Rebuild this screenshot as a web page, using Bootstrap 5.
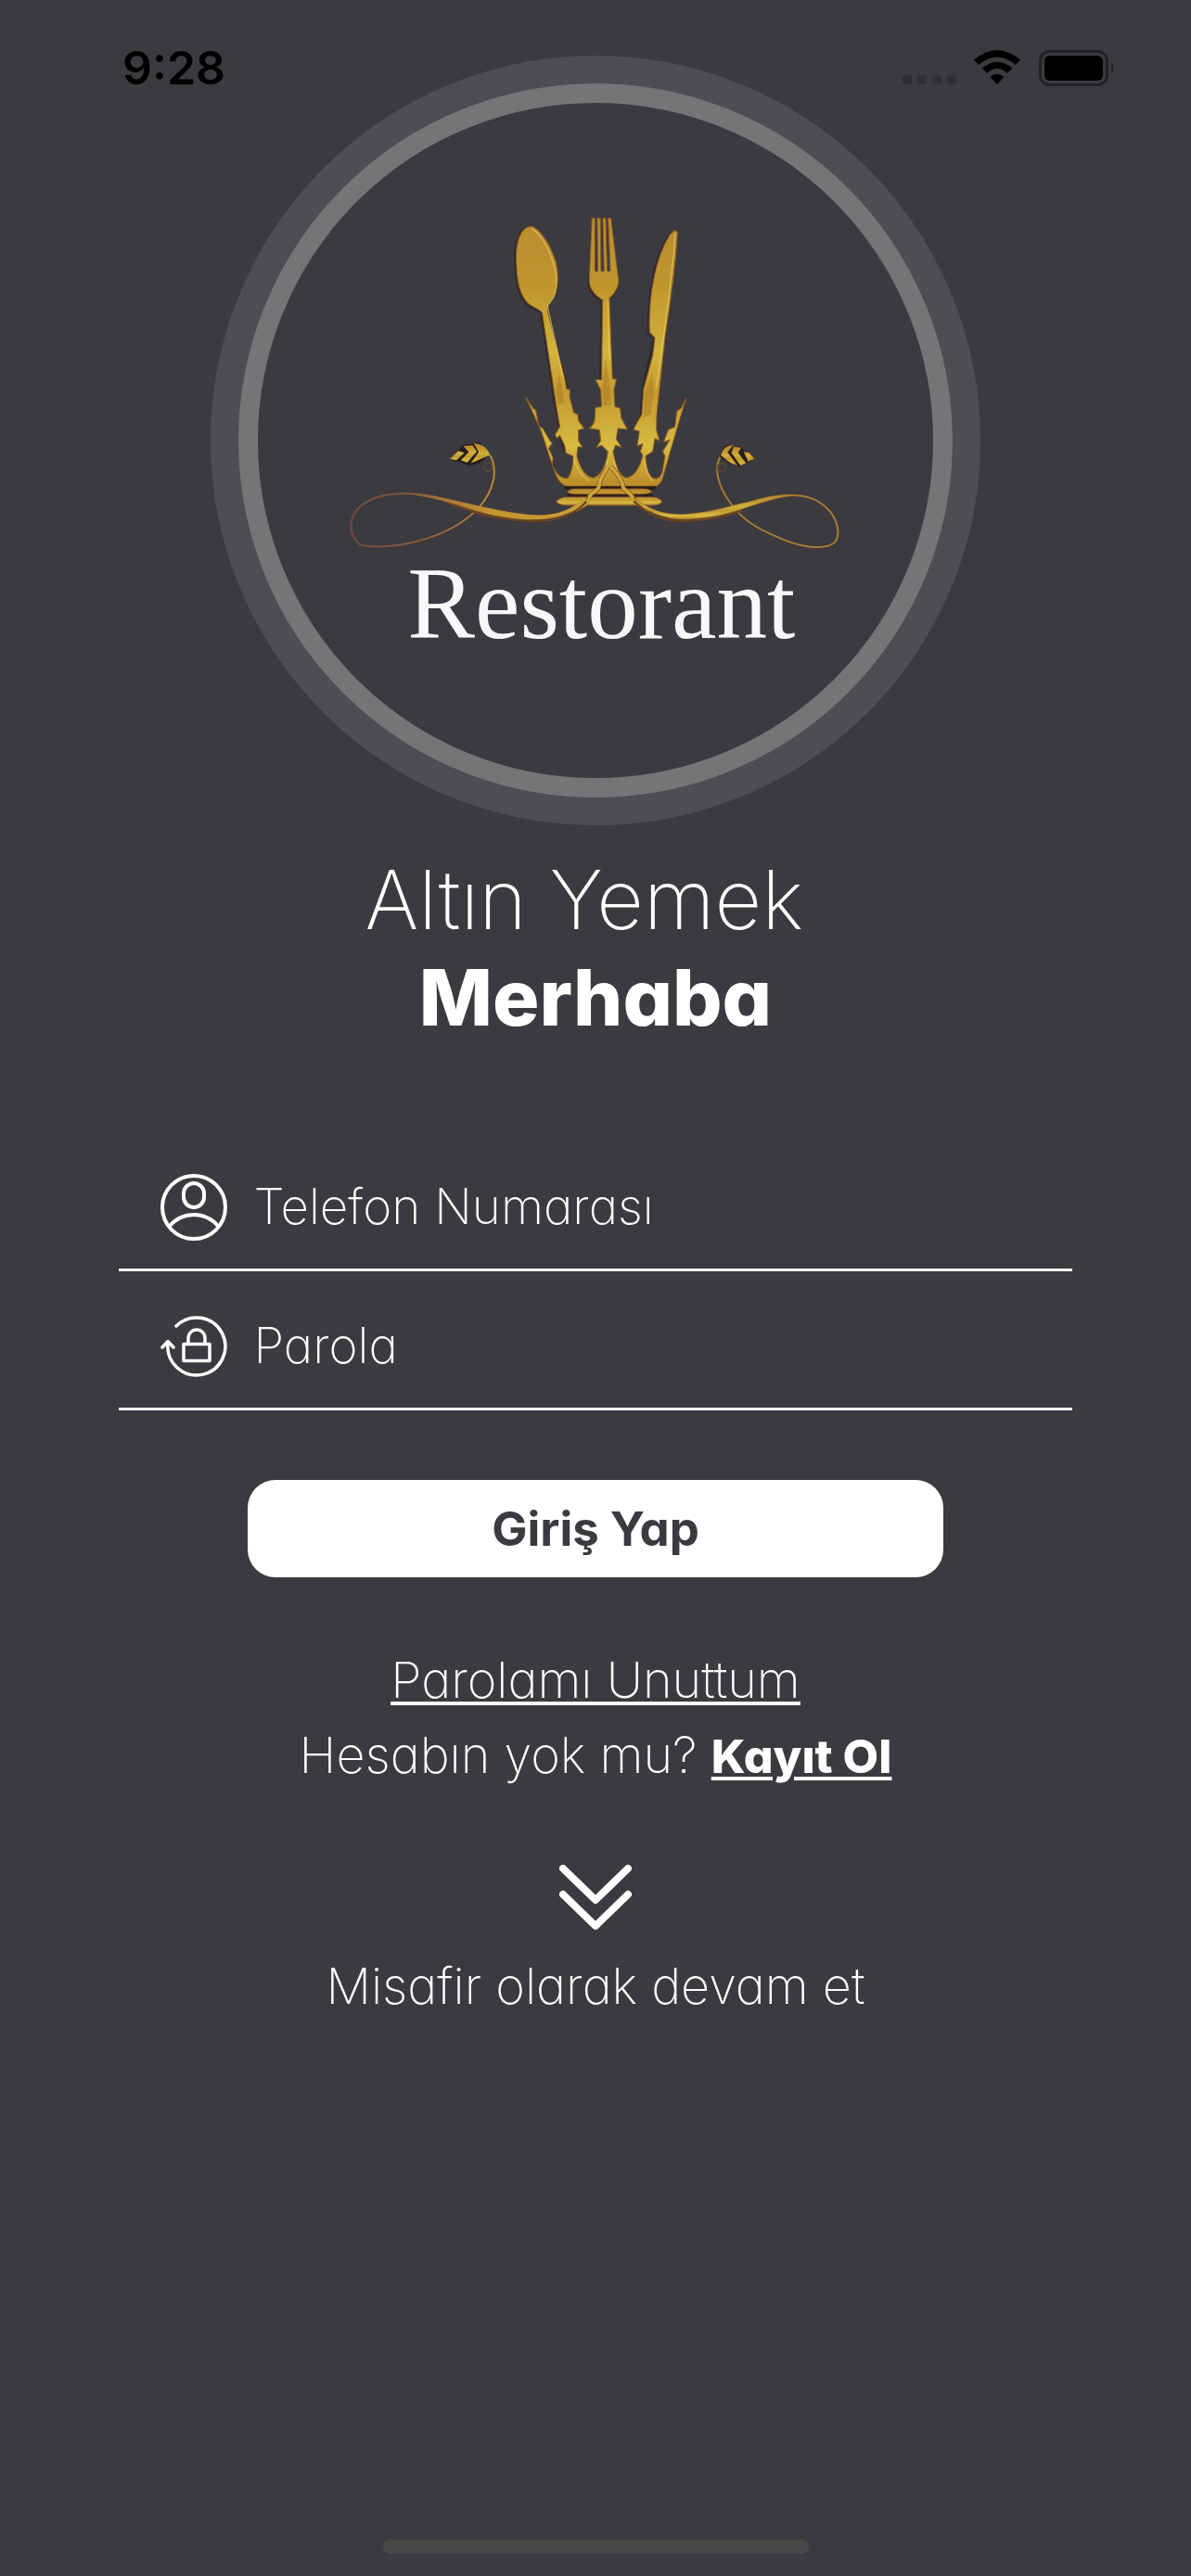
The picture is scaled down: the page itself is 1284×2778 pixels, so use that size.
<!DOCTYPE html>
<html lang="tr">
<head>
<meta charset="utf-8">
<meta name="viewport" content="width=device-width, initial-scale=1">
<title>Altın Yemek</title>
<link href="https://cdn.jsdelivr.net/npm/bootstrap@5.3.0/dist/css/bootstrap.min.css" rel="stylesheet">
<style>
  body {
    background: #3b3a3e;
    color: #fff;
    font-family: Inter, "Liberation Sans", sans-serif;
    font-size: 54px;
    font-weight: 200;
    line-height: 81px;
    font-feature-settings: "cv11";
  }
  input, button { font-feature-settings: inherit; }
  .status-bar { padding: 41px 84px 0 132px; color: #000; }
  .clock { font-size: 50px; font-weight: 600; line-height: 64px; font-feature-settings: normal; }
  .signal { width: 232px; height: 42px; margin-top: 13px; }
  .screen { padding: 60px 10% 0; }
  .emblem {
    width: 830px;
    max-width: 100%;
    aspect-ratio: 1;
    border: 30px solid #4e4d51;
  }
  .emblem-inner { border: 21px solid #757476; }
  .emblem svg { width: 77%; margin-top: -30px; }
  .brand-word { font-family: "Liberation Serif", serif; font-size: 109px; font-weight: 400; }
  .greeting { margin-top: 28px; font-size: 88px; line-height: 105px; font-weight: 200; }
  .greeting strong { font-size: 84px; font-weight: 800; }
  .login { margin-top: 93px; }
  .field {
    height: 150px;
    padding: 14px 45px 0;
    gap: 28px;
    border-bottom: 3px solid #f7f7f5;
  }
  .field label { line-height: 0; }
  .field svg { width: 72px; height: 72px; }
  .field .form-control { height: 81px; font-size: 53px; font-weight: 200; line-height: 81px; color: #fff; }
  .field .form-control::placeholder { color: #fff; opacity: 1; }
  .btn-login {
    width: 750px;
    max-width: 100%;
    height: 105px;
    margin-top: 75px;
    border-radius: 30px;
    background: #fff;
    color: #3b3a3e;
    font-size: 51px;
    font-weight: 700;
    line-height: 60px;
  }
  .help { margin-top: 70px; }
  .help a { text-decoration-thickness: 4px; text-underline-offset: 4px; }
  .register { font-size: 50px; font-weight: 800; }
  .guest { margin-top: 76px; gap: 20px; }
  .guest svg { width: 78px; height: 70px; }
  .home-bar { width: 459px; height: 15px; margin-bottom: 24px; background: #484847; }
</style>
</head>
<body class="d-flex flex-column min-vh-100 position-relative">

<header class="status-bar position-absolute top-0 start-0 w-100 d-flex justify-content-between align-items-start">
  <span class="clock">9:28</span>
  <svg class="signal" viewBox="0 0 232 42" aria-hidden="true">
    <g fill="#303034">
      <rect x="5" y="27" width="10" height="10" rx="3"/><rect x="21" y="27" width="10" height="10" rx="3"/>
      <rect x="37" y="27" width="10" height="10" rx="3"/><rect x="53" y="27" width="10" height="10" rx="3"/>
    </g>
    <path d="M82 10.500Q107 -10.500 132 10.500L127 16Q107 -1 87 16Z"/>
    <path d="M91 19.500Q107 6 123.500 19.500L118 25Q107 15 96 25Z"/>
    <path d="M99.500 29Q107 22.500 114.500 29L107 37Z"/>
    <rect x="153.500" y="1.500" width="72" height="36" rx="10" fill="none" stroke="#222224" stroke-width="3"/>
    <rect x="158" y="6" width="63" height="27" rx="6"/>
    <path d="M230 13.500q4 2 4 6t-4 6z" fill="#222224"/>
  </svg>
</header>

<main class="screen flex-grow-1 d-flex flex-column align-items-center text-center">
  <div class="emblem rounded-circle">
    <div class="emblem-inner rounded-circle w-100 h-100 d-flex align-items-center justify-content-center">
      <svg viewBox="362 210 560 500" role="img" aria-label="Restorant">
        <defs>
          <linearGradient id="gold" x1="0" y1="0" x2="0" y2="1">
            <stop offset="0" stop-color="#b98d33"/><stop offset=".25" stop-color="#bf962d"/>
            <stop offset=".5" stop-color="#d2b23c"/><stop offset=".65" stop-color="#c29a30"/>
            <stop offset=".85" stop-color="#d9ba42"/><stop offset="1" stop-color="#b98a2a"/>
          </linearGradient>
          <linearGradient id="wireLeft"><stop offset="0" stop-color="#6f4a3d"/><stop offset=".5" stop-color="#8b5c3c"/><stop offset="1" stop-color="#b98a35"/></linearGradient>
          <linearGradient id="bandLeft"><stop offset="0" stop-color="#8b5c3c"/><stop offset=".5" stop-color="#c3942d"/><stop offset="1" stop-color="#c99d35"/></linearGradient>
        </defs>

        <!-- crown with spoon, fork and knife -->
        <g transform="translate(540 220) scale(.33333)" stroke-linejoin="round">
          <path fill="#2b2023" stroke="#2b2023" stroke-width="6" opacity=".6" transform="translate(-4 3)" d="M97 72C60 72 45 130 50 200C52 260 65 310 100 330C120 340 130 345 133 352L178 650L205 790L250 790L222 600L150 345L153 325C186 290 188 240 178 190C160 130 125 78 97 72ZM295 215L285 250C288 280 305 295 328 310L325 568L350 568L350 305C370 295 378 280 380 250ZM560 85C520 120 475 240 480 415L497 432L460 600L455 680L503 680L530 430C550 300 568 150 570 90Z"/>
          <path fill="url(#gold)" stroke="#8a5a26" stroke-width="3" d="M80 625L105 662L112 665L122 718L135 725L160 768L166 772L154 790L168 820L165 842C176 870 190 887 215 887C226 872 233 850 233 815L210 805L205 780L190 748L180 757L175 745L190 720L178 650L133 352C130 345 120 340 100 330C65 310 52 260 50 200C45 130 60 75 97 72C125 78 160 130 178 190C188 240 186 290 153 325L150 345L205 560L212 598L222 600L222 625L235 675L248 680L250 700L268 725L250 731L250 765L263 785L248 785L245 815C255 850 270 884 300 885C325 875 340 840 345 800L325 780L308 787L322 765L318 730L285 725C295 720 303 705 303 690L305 658L325 655L322 600L305 568L325 568L328 310C305 295 288 280 285 250L294 46L303 46L303 215Q308 222 313 215L311 46L321 46L323 215Q328 222 333 215L329 46L338 46L343 215Q348 222 353 215L346 46L355 46L380 250C378 280 360 295 350 305L360 565L373 567L365 600L368 655L385 660L388 690L408 728L378 725L372 760L390 787L370 780L362 800C370 840 380 878 405 885C430 882 450 850 458 812L450 800L458 775L440 782L447 735L428 728L440 705L455 680L460 600L490 490L497 432L480 415C475 300 500 170 545 100L560 85L570 90C568 150 550 300 530 430L503 680L502 730L512 765L497 758L490 800L467 815C470 850 475 885 500 888C515 885 520 875 522 860L530 815L522 800L545 762L525 770L540 730L562 720L568 670L582 660L598 628L570 720L524 880C518 905 505 914 490 915L215 915C190 905 178 885 165 842L130 735Z"/>
          <path fill="#a87524" opacity=".45" d="M178 600L188 545L198 600L205 640L186 650ZM328 570L338 498L350 570L356 650L330 650ZM464 610L488 545L493 610L484 680L460 690Z"/>
          <path fill="none" stroke="#ecd56a" stroke-width="3" opacity=".7" d="M100 80C130 95 165 160 178 230C184 280 172 305 150 328L200 560M345 310L350 500M563 95C556 200 532 380 512 520L500 600M235 820Q245 870 285 895M345 825Q335 870 312 895M365 830Q375 870 392 895M462 830Q470 870 490 898"/>
          <path fill="#2a1c18" d="M205 912H500V922H205ZM215 937H490V945H215Z"/>
          <path fill="url(#gold)" stroke="#9c642b" stroke-width="3" d="M215 930Q225 920 245 921H460Q480 922 486 930Q475 937 455 937H240Q222 937 215 930ZM178 962Q190 948 215 948H490Q512 950 520 962Q512 973 490 973H210Q188 973 178 962Z"/>
          <path fill="none" stroke="#7b4d1e" stroke-width="15" d="M345 850Q320 885 314 920L288 940L274 970L240 990M355 850Q390 885 396 920L420 940L440 968L480 990"/>
          <path fill="none" stroke="#cfa53a" stroke-width="11" d="M345 850Q320 885 314 920L290 938L278 966L240 989M355 850Q390 885 396 920L418 938L435 966L478 989"/>
        </g>

        <!-- left flourish -->
        <g transform="translate(370 460) scale(.33333)" fill="none">
          <path stroke="url(#wireLeft)" stroke-width="6" d="M330 235C260 215 150 202 80 240C15 275 10 345 55 382C150 400 330 370 435 265C490 205 500 140 475 92"/>
          <circle cx="468" cy="130" r="14" stroke="#5e4935" stroke-width="4"/>
          <path stroke="#6b4220" stroke-width="8" d="M330 242C380 258 420 276 440 280C520 300 600 308 670 301C730 288 765 266 785 242"/>
          <path fill="url(#bandLeft)" d="M785 226C735 270 690 287 620 285C540 281 440 255 300 225L180 216C290 222 380 258 440 275C520 296 610 308 680 294C740 280 765 262 785 236Z"/>
          <path fill="#241c1e" d="M345 106L385 60L440 50L475 90L440 118L405 125L370 112Z"/>
          <path fill="url(#gold)" d="M345 104L372 78L392 84L366 108ZM388 62L418 60L432 80L400 116L380 108L406 82ZM422 54Q460 55 475 92L454 100L412 118L438 82Z"/>
        </g>

        <!-- right flourish -->
        <g transform="translate(640 460) scale(.33333)" fill="none">
          <path stroke="#a87a38" stroke-width="6" d="M560 236C620 214 690 218 730 245C785 280 800 340 780 372C745 405 650 385 590 355C520 325 480 300 440 245C400 190 385 130 412 92"/>
          <circle cx="412" cy="132" r="14" stroke="#5e4935" stroke-width="4"/>
          <path stroke="#6b4220" stroke-width="8" d="M130 240C160 272 200 294 250 302C330 310 420 292 480 270"/>
          <path fill="url(#gold)" stroke="#9c6c28" stroke-width="2" d="M130 228C180 272 230 284 290 283C380 278 440 255 500 243C560 225 600 218 650 220C590 228 530 248 480 265C420 286 330 306 250 296C200 286 155 264 130 236Z"/>
          <path fill="#241c1e" d="M405 95L425 60L470 62L520 105L470 130L435 118Z"/>
          <path fill="url(#gold)" stroke="#7d5522" stroke-width="2" d="M410 92Q420 58 450 60L432 82L464 126L440 116ZM452 64L476 68L466 84L492 118L474 126L444 84ZM484 80L502 84L519 104L498 112Z"/>
        </g>

        <text class="brand-word" x="648" y="688" text-anchor="middle" fill="#f8f8fa">Restorant</text>
      </svg>
    </div>
  </div>

  <h1 class="greeting mb-0">
    <span class="d-block">Altın Yemek&nbsp;</span>
    <strong class="d-block">Merhaba</strong>
  </h1>

  <form class="login w-100">
    <div class="field d-flex align-items-center">
      <label class="flex-shrink-0" for="phone">
        <svg viewBox="0 0 72 72" fill="none" stroke="#fff" stroke-width="4" role="img" aria-label="Telefon Numarası">
          <circle cx="36" cy="36" r="34"/>
          <rect x="25" y="10" width="22" height="26" rx="11"/>
          <path d="M9 57Q20 44 36 44T63 57"/>
        </svg>
      </label>
      <input id="phone" type="tel" class="form-control border-0 bg-transparent shadow-none p-0" placeholder="Telefon Numarası">
    </div>
    <div class="field d-flex align-items-center">
      <label class="flex-shrink-0" for="pass">
        <svg viewBox="0 0 72 72" fill="none" stroke="#fff" stroke-width="3.500" stroke-linecap="round" stroke-linejoin="round" role="img" aria-label="Parola">
          <path d="M17 14A31 31 0 1 1 8 33M2 37L8 30.500L14 37"/>
          <rect x="25" y="33.500" width="28" height="18"/>
          <path d="M30 33V27a9 9 0 0 1 18 0v6"/>
        </svg>
      </label>
      <input id="pass" type="password" class="form-control border-0 bg-transparent shadow-none p-0" placeholder="Parola">
    </div>
    <button type="submit" class="btn btn-login border-0 p-0">Giriş Yap</button>
  </form>

  <div class="help">
    <a class="d-block text-white" href="#forgot">Parolamı Unuttum</a>
    <div>Hesabın yok mu? <a class="register text-white" href="#register">Kayıt Ol</a></div>
  </div>

  <a class="guest d-flex flex-column align-items-center text-white text-decoration-none" href="#guest">
    <svg viewBox="0 0 78 70" fill="none" stroke="#fff" stroke-width="8" stroke-linecap="round" stroke-linejoin="round" aria-hidden="true">
      <path d="M4 4L39 38L74 4M4 32L39 66L74 32"/>
    </svg>
    <span>Misafir olarak devam et</span>
  </a>
</main>

<div class="home-bar rounded-pill mx-auto"></div>

<script src="https://cdn.jsdelivr.net/npm/bootstrap@5.3.0/dist/js/bootstrap.bundle.min.js"></script>
</body>
</html>
